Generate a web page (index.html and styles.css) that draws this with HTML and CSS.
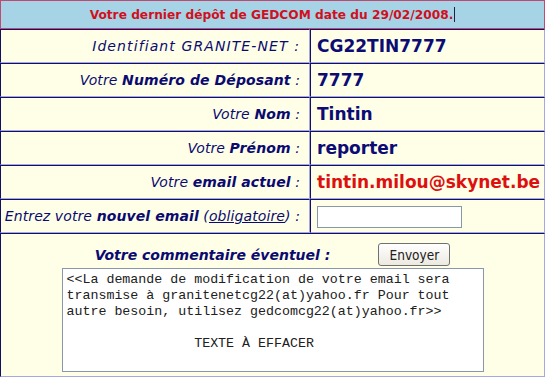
FILE: index.html
```html
<!DOCTYPE html>
<html lang="fr">
<head>
    <meta charset="UTF-8">
    <title>Modification email GEDCOM</title>
    <link rel="stylesheet" href="styles.css">
</head>
<body>
    <table class="form-table">
        <tr>
            <td class="header" colspan="2">Votre dernier dépôt de GEDCOM date du 29/02/2008.<span class="caret"></span></td>
        </tr>
        <tr>
            <td class="label wide">Identifiant GRANITE-NET :</td>
            <td class="value">CG22TIN7777</td>
        </tr>
        <tr>
            <td class="label">Votre <b>Numéro de Déposant</b> :</td>
            <td class="value">7777</td>
        </tr>
        <tr>
            <td class="label">Votre <b>Nom</b> :</td>
            <td class="value">Tintin</td>
        </tr>
        <tr>
            <td class="label">Votre <b>Prénom</b> :</td>
            <td class="value">reporter</td>
        </tr>
        <tr>
            <td class="label">Votre <b>email actuel</b> :</td>
            <td class="value email">tintin.milou@skynet.be</td>
        </tr>
        <tr>
            <td class="label">Entrez votre <b>nouvel email</b> (<u>obligatoire</u>) :</td>
            <td class="value"><input type="text" class="email-input"></td>
        </tr>
        <tr>
            <td class="comment-cell" colspan="2">
                <div class="comment-box">
                    <div class="comment-head">
                        <span class="comment-title">Votre commentaire éventuel :</span>
                        <button>Envoyer</button>
                    </div>
                    <textarea class="comment-text"><<La demande de modification de votre email sera transmise à granitenetcg22(at)yahoo.fr Pour tout autre besoin, utilisez gedcomcg22(at)yahoo.fr>>

                TEXTE À EFFACER</textarea>
                </div>
            </td>
        </tr>
    </table>
</body>
</html>
```

FILE: styles.css
```css
* {
    margin: 0;
    padding: 0;
    box-sizing: border-box;
}

body {
    background-color: #ffffe8;
    font-family: 'DejaVu Sans', Verdana, sans-serif;
}

.form-table {
    width: 545px;
    border-spacing: 0;
    background-color: #ffffe8;
}

.form-table td {
    border-top: 1px solid #10106a;
    border-left: 1px solid #10106a;
    border-bottom: 1px solid #a8a8e0;
    border-right: 1px solid #a8a8e0;
}

.form-table td.header {
    height: 29px;
    background-color: #a6d4e6;
    border: 1px solid #c04a70;
    color: #d01020;
    font-weight: bold;
    font-size: 12.2px;
    text-align: center;
}

.caret {
    display: inline-block;
    width: 1px;
    height: 15px;
    margin-left: 1px;
    background-color: #202040;
    vertical-align: -3px;
}

.label {
    width: 310px;
    height: 34px;
    padding-right: 9px;
    text-align: right;
    white-space: nowrap;
    font-style: italic;
    font-size: 14px;
    letter-spacing: 0.1px;
    color: #0a0a70;
}

.label.wide {
    letter-spacing: 1.1px;
}

.label b {
    font-weight: bold;
}

.label u {
    text-decoration: underline;
}

.value {
    padding-left: 6px;
    font-weight: bold;
    font-size: 17px;
    color: #0c0c74;
}

.value.email {
    color: #dd1010;
}

.email-input {
    width: 145px;
    height: 22px;
    margin-top: 2px;
    border: 1px solid #8898a8;
    background: white;
}

.comment-cell {
    height: 144px;
    padding: 9px 0 3px 0;
    vertical-align: top;
}

.comment-box {
    display: flex;
    flex-direction: column;
    align-items: center;
    gap: 2px;
}

.comment-head {
    display: flex;
    align-items: center;
    gap: 48px;
}

.comment-title {
    font-style: italic;
    font-weight: bold;
    font-size: 14px;
    color: #0a0a70;
}

button {
    width: 72px;
    height: 23px;
    font-family: 'DejaVu Sans Condensed', 'DejaVu Sans', sans-serif;
    font-size: 13.5px;
    color: #202020;
    background: linear-gradient(#ffffff, #ece9e0);
    border: 1px solid #707070;
    border-radius: 3px;
}

.comment-text {
    width: 422px;
    height: 104px;
    padding: 3px 4px;
    border: 1px solid #8898a8;
    background: white;
    font-family: 'Liberation Mono', 'Courier New', monospace;
    font-size: 13.3px;
    line-height: 16px;
    color: #202020;
    resize: none;
    overflow: hidden;
}
```
